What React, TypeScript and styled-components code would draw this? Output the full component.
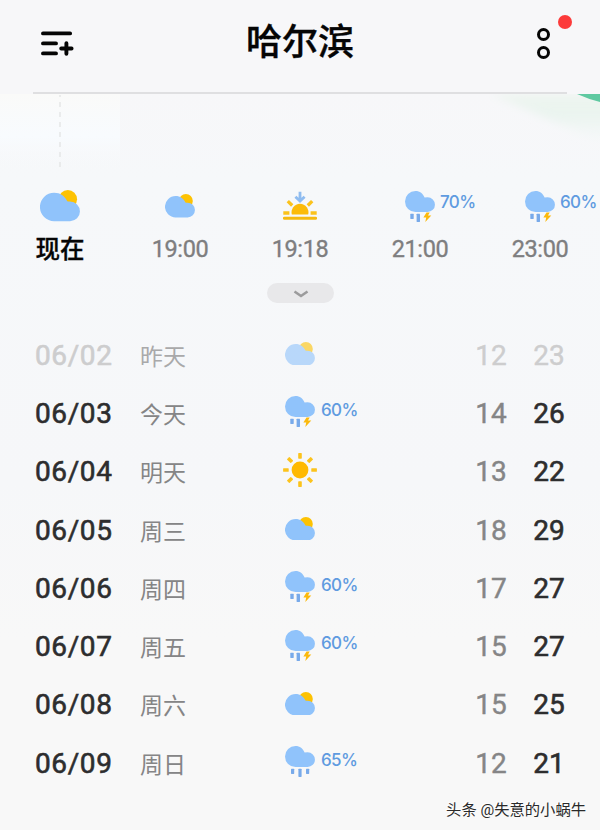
import styled, { createGlobalStyle } from "styled-components"

type Weather = "cloudy" | "storm" | "rain" | "sunny" | "sunset"

interface Hour {
    time: string
    weather: Weather
    chance?: string
    now?: boolean
}

interface Day {
    date: string
    day: string
    weather: Weather
    chance?: string
    low: number
    high: number
    past?: boolean
}

const hours: Hour[] = [
    { time: "现在", weather: "cloudy", now: true },
    { time: "19:00", weather: "cloudy" },
    { time: "19:18", weather: "sunset" },
    { time: "21:00", weather: "storm", chance: "70%" },
    { time: "23:00", weather: "storm", chance: "60%" },
]

const days: Day[] = [
    { date: "06/02", day: "昨天", weather: "cloudy", low: 12, high: 23, past: true },
    { date: "06/03", day: "今天", weather: "storm", chance: "60%", low: 14, high: 26 },
    { date: "06/04", day: "明天", weather: "sunny", low: 13, high: 22 },
    { date: "06/05", day: "周三", weather: "cloudy", low: 18, high: 29 },
    { date: "06/06", day: "周四", weather: "storm", chance: "60%", low: 17, high: 27 },
    { date: "06/07", day: "周五", weather: "storm", chance: "60%", low: 15, high: 27 },
    { date: "06/08", day: "周六", weather: "cloudy", low: 15, high: 25 },
    { date: "06/09", day: "周日", weather: "rain", chance: "65%", low: 12, high: 21 },
]

const WeatherIcon = ({ weather, size = 30 }: { weather: Weather; size?: number }) => {
    if (weather === "cloudy") {
        return (
            <svg width={size} height={(size * 23.4) / 30} viewBox="0 0 30 23.4">
                <circle cx="20.9" cy="6.9" r="6.9" fill="#fdc203" />
                <path
                    d="M10.6 2.1C15.2 2.1 18.6 4.6 20.4 8.4Q21.2 8.7 22.6 8.7A7.35 7.35 0 0 1 22.6 23.4H10.6A10.65 10.65 0 0 1 10.6 2.1Z"
                    fill="#90c3fb"
                />
            </svg>
        )
    }
    if (weather === "sunny") {
        return (
            <svg width="34" height="34" viewBox="-17 -17 34 34">
                <circle r="8.4" fill="#ffb900" />
                {[0, 45, 90, 135, 180, 225, 270, 315].map((angle) => (
                    <rect
                        key={angle}
                        x="-1.8"
                        y="-16.9"
                        width="3.6"
                        height="5.6"
                        rx="0.6"
                        fill="#fcc31c"
                        transform={`rotate(${angle})`}
                    />
                ))}
            </svg>
        )
    }
    if (weather === "sunset") {
        return (
            <svg width="34" height="30" viewBox="0 0 34 30" fill="none">
                <path d="M8.8 23.6A8.5 8.5 0 1 1 25.2 23.6Z" fill="#fcbb09" />
                <path
                    d="M0.3 22H6.4M27.6 22H33.7M4.8 10.1L9.2 14.5M29.2 10.1L24.8 14.5"
                    stroke="#fbc21c"
                    strokeWidth="3.3"
                />
                <path d="M1.3 27.3H32.7" stroke="#f5b90f" strokeWidth="2.9" strokeLinecap="round" />
                <path d="M17 0.8V10M12.4 5.8L17 10L21.6 5.8" stroke="#8fbcf0" strokeWidth="2.8" />
            </svg>
        )
    }
    return (
        <svg width="30" height="31" viewBox="0 0 30 31">
            <path
                d="M10.5 0C14.7 0 18.2 2.6 19.6 6.6Q21 6.3 22.6 6.3A7.35 7.35 0 0 1 22.6 21H10.5A10.5 10.5 0 0 1 10.5 0Z"
                fill="#90c3fb"
            />
            {weather === "storm" ? (
                <>
                    <rect x="5.3" y="22.8" width="3.4" height="5.2" rx="0.4" fill="#78aaea" />
                    <rect x="11.6" y="22.8" width="3.4" height="8.2" rx="0.4" fill="#78aaea" />
                    <path d="M21.5 21.4L18.4 26.6H21.2L20.3 31L26.3 24.4H23L24.7 21.4Z" fill="#fbb90c" />
                </>
            ) : (
                <>
                    <rect x="6" y="22.7" width="3.2" height="5.2" rx="0.6" fill="#78aaea" />
                    <rect x="13.4" y="22.7" width="3.2" height="8.2" rx="0.6" fill="#78aaea" />
                    <rect x="21" y="22.7" width="3.2" height="5.2" rx="0.6" fill="#78aaea" />
                </>
            )}
        </svg>
    )
}

const App = () => {
    return (
        <Screen>
            <GlobalStyle />

            <Header>
                <svg width="33" height="25" viewBox="0 0 33 25" stroke="#050505" strokeWidth="3.9" strokeLinecap="round">
                    <path d="M2 2.4H29.1M2 12.4H15M2 22.4H15M20.2 17.5H30.6M25.4 12.3V22.7" />
                </svg>
                <h1>哈尔滨</h1>
                <MoreButton>
                    <span></span>
                    <span></span>
                    <i></i>
                </MoreButton>
            </Header>

            <Chart>
                <svg width="600" height="77" viewBox="0 0 600 77">
                    <defs>
                        <linearGradient id="haze" x1="0" y1="0" x2="0" y2="1">
                            <stop offset="0" stopColor="#eef5f0" />
                            <stop offset="0.4" stopColor="#eaf4ef" />
                            <stop offset="1" stopColor="#f2f8f6" stopOpacity="0" />
                        </linearGradient>
                        <linearGradient id="past" x1="0" y1="0" x2="0" y2="1">
                            <stop offset="0" stopColor="#fafaf9" />
                            <stop offset="0.55" stopColor="#f8fbfe" />
                            <stop offset="1" stopColor="#f7f9fa" stopOpacity="0" />
                        </linearGradient>
                        <filter id="soft">
                            <feGaussianBlur stdDeviation="4" />
                        </filter>
                    </defs>
                    <rect width="120" height="77" fill="url(#past)" />
                    <path
                        d="M60 1V74"
                        stroke="#e2e4e4"
                        strokeWidth="1.3"
                        strokeDasharray="5 5"
                        strokeDashoffset="3"
                    />
                    <path d="M490 0H610V52Q545 24 490 0Z" fill="url(#haze)" filter="url(#soft)" />
                    <path d="M577 0H600V8Q588 5 577 0Z" fill="#5fc9a1" />
                </svg>
            </Chart>

            <Hours>
                {hours.map((hour) => (
                    <HourCell key={hour.time} $now={hour.now}>
                        <HourIcon $size={hour.now ? 40 : hour.weather === "sunset" ? 34 : 30}>
                            <WeatherIcon weather={hour.weather} size={hour.now ? 40 : 30} />
                            {hour.chance && <Chance>{hour.chance}</Chance>}
                        </HourIcon>
                        <div className="time">{hour.time}</div>
                    </HourCell>
                ))}
            </Hours>

            <Expand>
                <svg width="16" height="9" viewBox="0 0 16 9" fill="none">
                    <path d="M1.5 1.5L8 6L14.5 1.5" stroke="#9b9b9c" strokeWidth="2.6" />
                </svg>
            </Expand>

            <Days>
                {days.map((item) => (
                    <DayRow key={item.date} $past={item.past}>
                        <div className="date">{item.date}</div>
                        <div className="day">{item.day}</div>
                        <DayIcon $wide={item.weather === "sunny"}>
                            <WeatherIcon weather={item.weather} />
                            {item.chance && <Chance $low>{item.chance}</Chance>}
                        </DayIcon>
                        <div className="low">{item.low}</div>
                        <div className="high">{item.high}</div>
                    </DayRow>
                ))}
            </Days>

            <Credit>头条 @失意的小蜗牛</Credit>
        </Screen>
    )
}

export default App

const GlobalStyle = createGlobalStyle`
    body {
        margin: 0;
        background: #f7f8f9;
    }

    * {
        box-sizing: border-box;
    }
`

const Screen = styled.div`
    width: 600px;
    height: 830px;
    overflow: hidden;
    position: relative;
    display: flex;
    flex-direction: column;
    background: linear-gradient(#f7f7f9 0, #f7f7f9 94px, #f6f8fa 180px, #f6f7f9 480px, #f8f8f8 640px, #f8f8f8);
    font-family: Roboto, "Noto Sans CJK SC", sans-serif;
`

const Header = styled.div`
    height: 94px;
    margin: 0 33px;
    padding: 0 17px 5px 8px;
    flex-shrink: 0;
    display: grid;
    grid-template-columns: 33px 1fr 13px;
    align-items: center;
    border-bottom: 2px solid #dfdfe1;

    h1 {
        margin: 0 0 1px;
        padding-right: 11px;
        text-align: center;
        font-size: 36px;
        line-height: 52px;
        font-weight: 500;
        color: #050505;
        -webkit-text-stroke: 0.4px #050505;
    }
`

const MoreButton = styled.div`
    width: 13px;
    display: flex;
    flex-direction: column;
    gap: 5px;
    position: relative;

    span {
        width: 13px;
        height: 13px;
        border: 3.4px solid #050505;
        border-radius: 50%;
    }

    i {
        position: absolute;
        top: -13px;
        left: 21px;
        width: 14px;
        height: 14px;
        border-radius: 50%;
        background: #fc3a3a;
    }
`

const Chart = styled.div`
    height: 77px;
    flex-shrink: 0;

    svg {
        display: block;
    }
`

const Hours = styled.div`
    display: grid;
    grid-template-columns: repeat(5, 120px);
    padding-top: 12px;
`

const HourCell = styled.div<{ $now?: boolean }>`
    .time {
        padding-top: ${({ $now }) => ($now ? 2 : 1)}px;
        font-size: ${({ $now }) => ($now ? 24.5 : 23.5)}px;
        line-height: 36px;
        letter-spacing: ${({ $now }) => ($now ? 0 : -0.4)}px;
        font-weight: ${({ $now }) => ($now ? 500 : 400)};
        color: ${({ $now }) => ($now ? "#050505" : "#7e7e7f")};
        -webkit-text-stroke: ${({ $now }) => ($now ? 0.3 : 0.35)}px currentColor;
        text-align: center;
    }
`

const HourIcon = styled.div<{ $size: number }>`
    height: 47px;
    padding-left: ${({ $size }) => 60 - $size / 2}px;
    padding-bottom: 1px;
    display: flex;
    align-items: center;
    gap: 5px;

    svg {
        flex-shrink: 0;
    }
`

const Chance = styled.span<{ $low?: boolean }>`
    font-family: Inter, sans-serif;
    font-size: 17px;
    line-height: 20px;
    font-weight: 500;
    letter-spacing: -0.6px;
    color: #5f9be0;
    margin-bottom: ${({ $low }) => ($low ? 4 : 8)}px;
`

const Expand = styled.div`
    width: 67px;
    height: 20px;
    margin: 15px 0 0 267px;
    border-radius: 10px;
    flex-shrink: 0;
    background: #e8e8ea;
    display: flex;
    align-items: center;
    justify-content: center;
    padding-top: 2px;
`

const Days = styled.div`
    margin-top: 23px;
    padding: 0 22px 0 35px;
`

const DayRow = styled.div<{ $past?: boolean }>`
    height: 58.3px;
    display: grid;
    grid-template-columns: 105px 145px 178px 56px 60px;
    align-items: center;
    font-size: 28px;
    font-weight: 400;

    .date {
        color: ${({ $past }) => ($past ? "#cdcdce" : "#2d2d2e")};
        letter-spacing: 0.6px;
        -webkit-text-stroke: 0.6px currentColor;
    }

    .day {
        padding-bottom: 1px;
        font-size: 23px;
        color: ${({ $past }) => ($past ? "#a9a9aa" : "#858586")};
    }

    .low,
    .high {
        text-align: center;
    }

    .low {
        color: ${({ $past }) => ($past ? "#cdcdce" : "#858586")};
        -webkit-text-stroke: 0.4px currentColor;
    }

    .high {
        color: ${({ $past }) => ($past ? "#cdcdce" : "#2d2d2e")};
        -webkit-text-stroke: ${({ $past }) => ($past ? 0.4 : 0.6)}px currentColor;
    }

    svg {
        opacity: ${({ $past }) => ($past ? 0.6 : 1)};
    }
`

const DayIcon = styled.div<{ $wide: boolean }>`
    display: flex;
    align-items: center;
    gap: 6px;
    padding-bottom: 3px;
    margin-left: ${({ $wide }) => ($wide ? -2 : 0)}px;
`

const Credit = styled.div`
    position: absolute;
    right: 14px;
    bottom: 8px;
    font-size: 15.3px;
    line-height: 24px;
    color: #2a2a2a;
    text-shadow: -1px -1px 0 #fff;
    white-space: nowrap;
`
